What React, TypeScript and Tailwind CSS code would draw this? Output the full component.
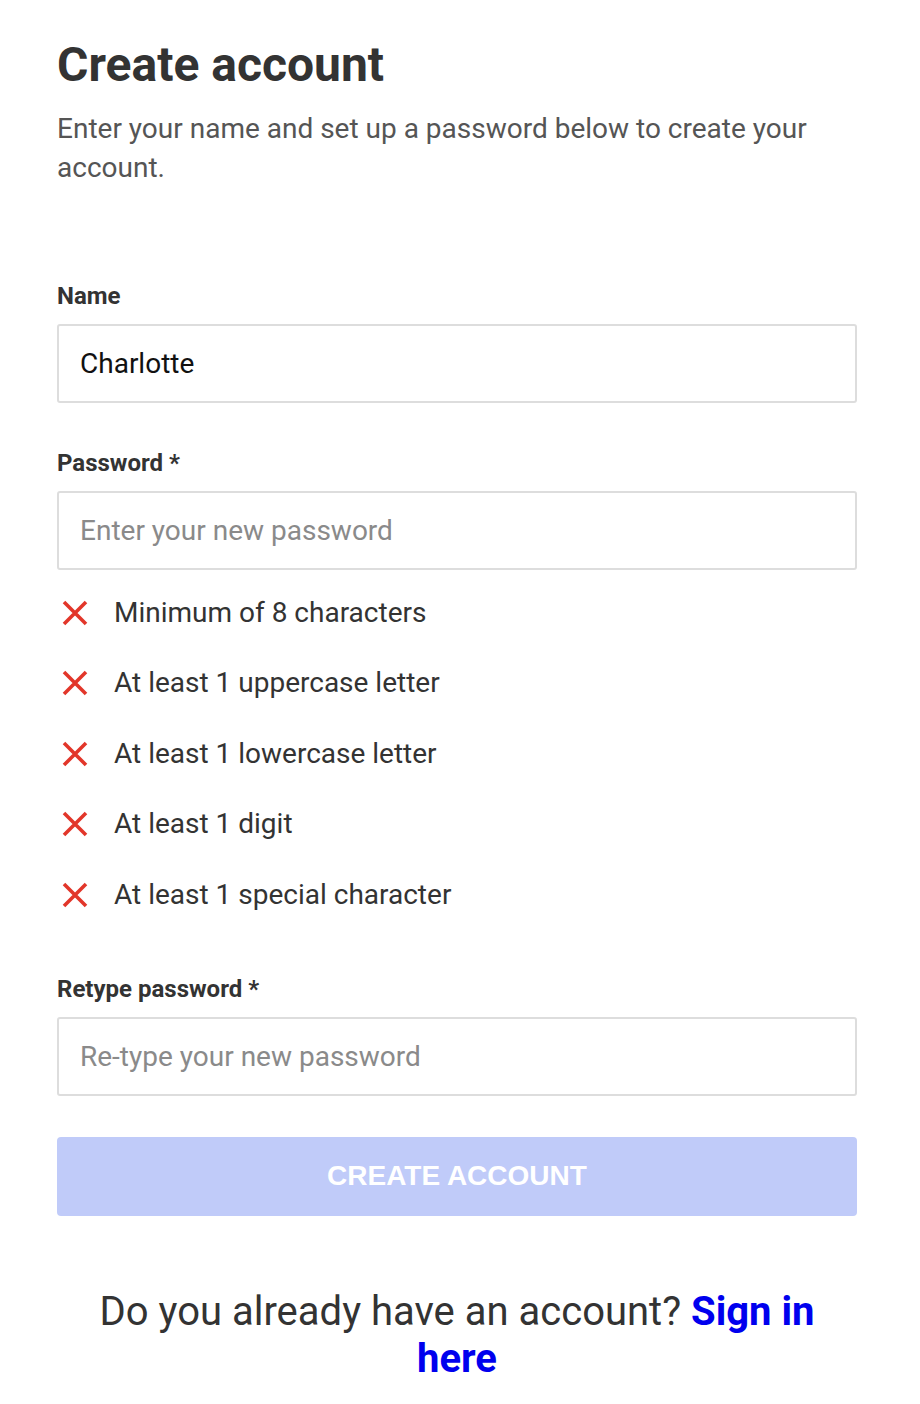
import React from 'react';

const rules = [
  'Minimum of 8 characters',
  'At least 1 uppercase letter',
  'At least 1 lowercase letter',
  'At least 1 digit',
  'At least 1 special character',
];

function Cross() {
  return (
    <svg width="26" height="26" viewBox="0 0 26 26" className="shrink-0">
      <path d="M2 2 L24 24 M24 2 L2 24" stroke="#e2362a" strokeWidth="3.6" strokeLinecap="butt" />
    </svg>
  );
}

function Field({ label, placeholder, value }: { label: string; placeholder?: string; value?: string }) {
  return (
    <div className="flex flex-col">
      <label className="text-[24px] leading-[30px] font-bold text-[#333]">{label}</label>
      <input
        readOnly
        value={value}
        placeholder={placeholder}
        className="mt-[13px] h-[79px] w-full rounded-[3px] border-2 border-[#dddddd] px-[21px] text-[28px] text-[#111] placeholder:text-[#8a8a8a] outline-none"
      />
    </div>
  );
}

export default function App() {
  return (
    <div className="min-h-[1404px] bg-white font-['Roboto',sans-serif]">
      <div className="ml-[57px] w-[800px] pt-[33px]">
        <h1 className="text-[48px] leading-[64px] font-bold text-[#333]">Create account</h1>
        <p className="mt-[12px] text-[28px] leading-[39px] text-[#555]">
          Enter your name and set up a password below to create your account.
        </p>

        <div className="mt-[94px]">
          <Field label="Name" value="Charlotte" />
        </div>

        <div className="mt-[45px]">
          <Field label="Password *" placeholder="Enter your new password" />
          <ul className="mt-[25px] flex flex-col gap-[34.4px]">
            {rules.map((r) => (
              <li key={r} className="flex items-center gap-[26px] pl-[5px]">
                <Cross />
                <span className="text-[28px] leading-[36px] text-[#333]">{r}</span>
              </li>
            ))}
          </ul>
        </div>

        <div className="mt-[61px]">
          <Field label="Retype password *" placeholder="Re-type your new password" />
        </div>

        <button className="mt-[41px] h-[79px] w-full rounded-[4px] bg-[#c0cbf9] font-['Liberation_Sans',Arial,sans-serif] text-[28px] font-bold text-white">
          CREATE ACCOUNT
        </button>

        <p className="mt-[72px] px-[20px] text-center text-[40px] leading-[47px] text-[#333]">
          Do you already have an account?{' '}
          <a href="#" className="font-bold text-[#0000ee]">Sign in here</a>
        </p>
      </div>
    </div>
  );
}
